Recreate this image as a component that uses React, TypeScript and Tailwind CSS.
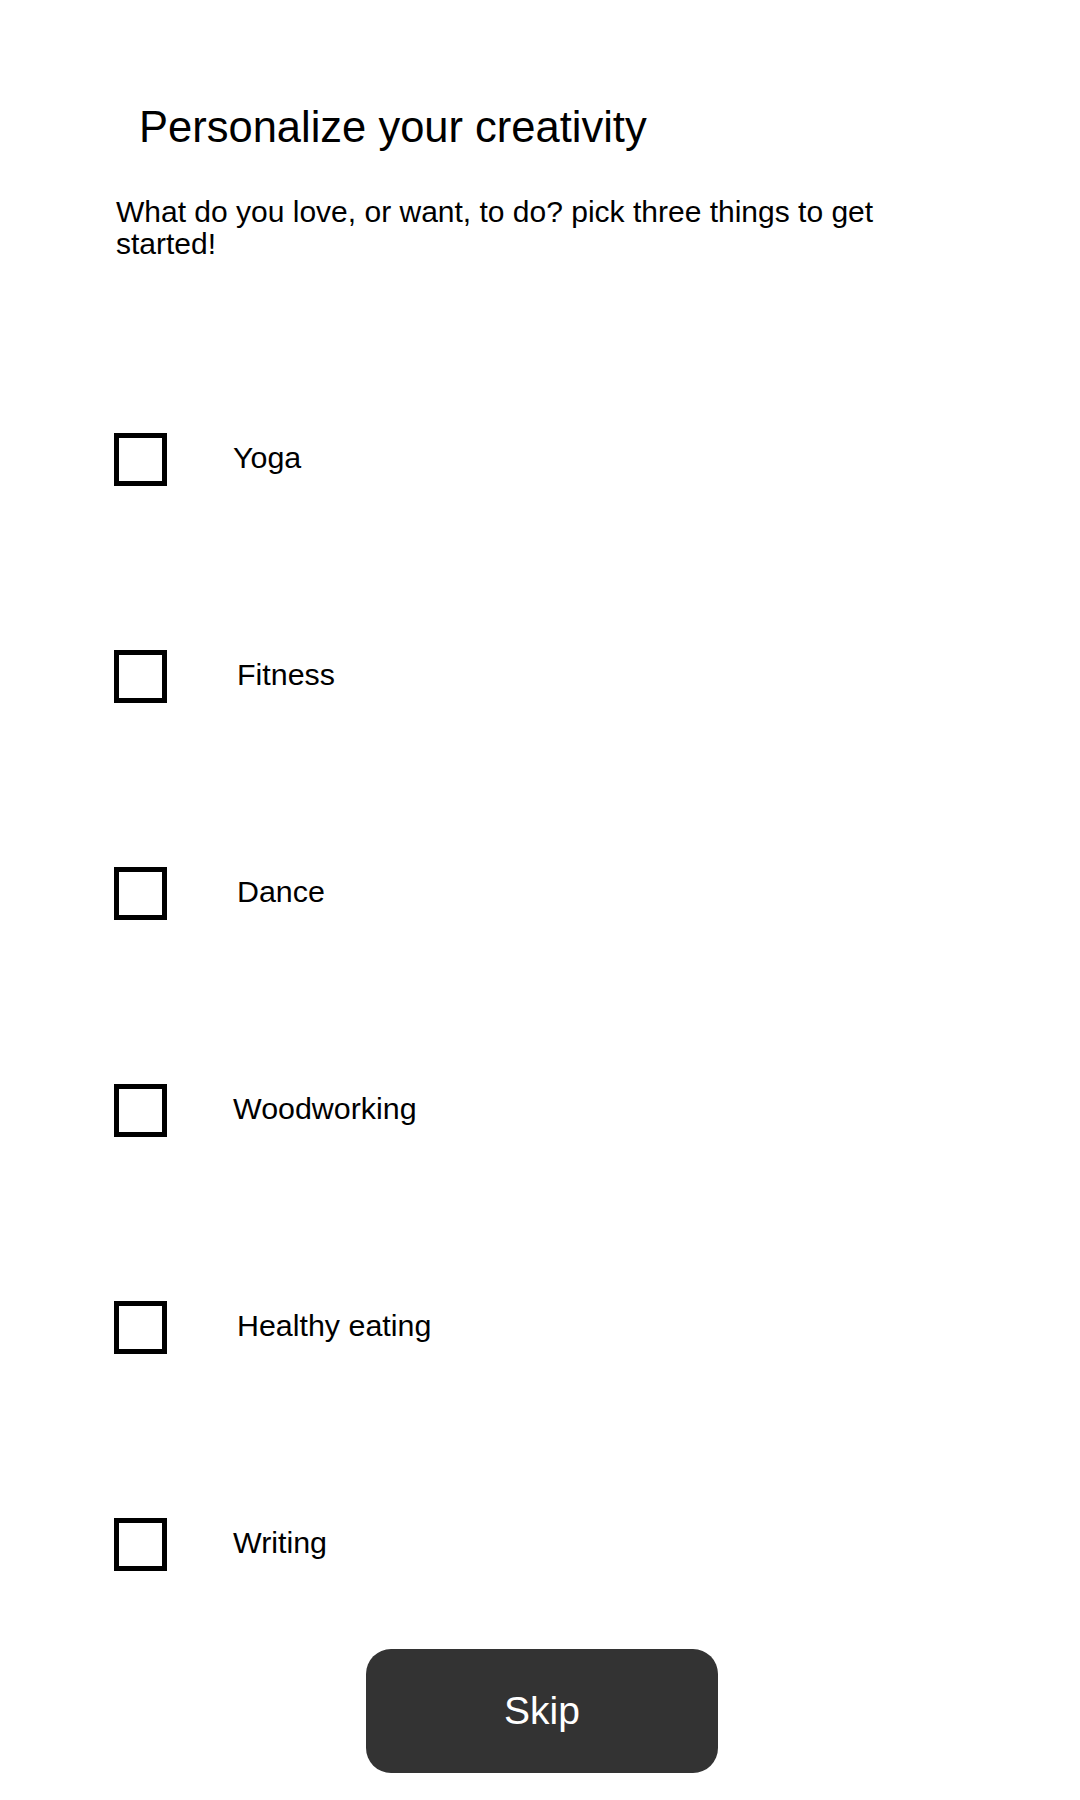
import { useState } from 'react';

const items = [
  { l: 'Yoga', m: 'ml-[66px]' },
  { l: 'Fitness', m: 'ml-[70px]' },
  { l: 'Dance', m: 'ml-[70px]' },
  { l: 'Woodworking', m: 'ml-[66px]' },
  { l: 'Healthy eating', m: 'ml-[70px]' },
  { l: 'Writing', m: 'ml-[66px]' },
];

export default function App() {
  const [picked, setPicked] = useState<string[]>([]);

  const toggle = (l: string) =>
    setPicked(p => (p.includes(l) ? p.filter(x => x !== l) : [...p, l]));

  return (
    <div className="min-h-screen bg-white text-black font-['Liberation_Sans',Arial,sans-serif]">
      <h1 className="pt-[103px] pl-[139px] text-[43.5px] leading-[48px]">Personalize your creativity</h1>
      <p className="mt-[45px] ml-[116px] max-w-[820px] text-[30px] leading-[32px]">
        What do you love, or want, to do? pick three things to get started!
      </p>

      <div className="mt-[173px] pl-[114px] flex flex-col gap-[164px]">
        {items.map(it => (
          <label key={it.l} className="flex items-center cursor-pointer" onClick={() => toggle(it.l)}>
            <span className="w-[53px] h-[53px] border-[5px] border-black flex items-center justify-center text-[32px] leading-none">
              {picked.includes(it.l) ? '✓' : ''}
            </span>
            <span className={`${it.m} pb-[3px] text-[30.4px]`}>{it.l}</span>
          </label>
        ))}
      </div>

      <button className="mt-[78px] ml-[366px] flex w-[352px] h-[124px] items-center justify-center rounded-[25px] bg-[#333333] text-[39px] text-white">
        Skip
      </button>
    </div>
  );
}
